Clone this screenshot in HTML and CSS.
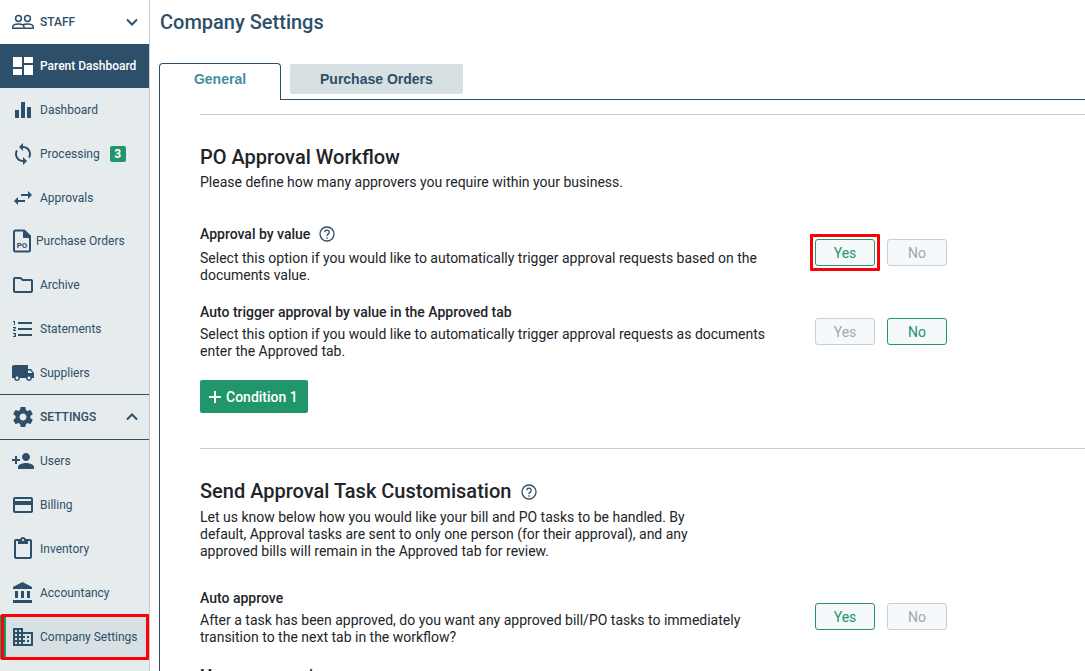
FILE: index.html
```html
<!DOCTYPE html>
<html lang="en">
<head>
<meta charset="utf-8">
<title>Company Settings</title>
<link rel="stylesheet" href="styles.css">
</head>
<body>
<div class="app">
  <nav class="sidebar" aria-label="Main">
    <button class="nav-group nav-staff" type="button">
      <svg class="icon" viewBox="0 0 24 24"><g fill="none" stroke="currentColor" stroke-width="1.500"><circle cx="7.500" cy="8.500" r="2.900"/><circle cx="16.500" cy="8.500" r="2.900"/><path d="M1.800 18.300v-1.300c0-1.800 2.700-3 5.700-3s5.500 1.200 5.500 3v1.300zM11.500 15c1.300-.7 3.200-1 5-1 3 0 5.700 1.200 5.700 3v1.300H13"/></g></svg>
      <span>STAFF</span>
      <svg class="chevron" viewBox="0 0 12 8"><path d="M1 1.500l5 5 5-5"/></svg>
    </button>
    <a class="nav-item parent" href="#"><svg class="icon" viewBox="0 0 24 24"><path d="M2 3h9v10H2zM13 3h9v6h-9zM2 15h9v6H2zM13 11h9v10h-9z"/></svg><span>Parent Dashboard</span></a>
    <a class="nav-item" href="#"><svg class="icon" viewBox="0 0 24 24"><path d="M4 12h4v8H4zM10 4h4v16h-4zM16 9h4v11h-4z"/></svg><span>Dashboard</span></a>
    <a class="nav-item" href="#"><svg class="icon" viewBox="0 0 24 24"><path d="M12 4V1L8 5l4 4V6c3.310 0 6 2.690 6 6 0 1.010-.25 1.970-.7 2.800l1.460 1.460C19.540 15.030 20 13.570 20 12c0-4.420-3.580-8-8-8zm0 14c-3.310 0-6-2.690-6-6 0-1.010.25-1.970.7-2.800L5.240 7.740C4.460 8.970 4 10.430 4 12c0 4.420 3.580 8 8 8v3l4-4-4-4v3z"/></svg><span>Processing</span><span class="badge">3</span></a>
    <a class="nav-item" href="#"><svg class="icon" viewBox="0 0 24 24"><path d="M21 9l-4-4v3h-7v2h7v3l4-4zM3 15l4 4v-3h7v-2H7v-3l-4 4z"/></svg><span>Approvals</span></a>
    <a class="nav-item orders" href="#"><svg class="icon" viewBox="0 0 24 24"><path fill="none" stroke="currentColor" stroke-width="2" d="M4.500 1.500h8.500l6 6V21a1.500 1.500 0 0 1-1.500 1.500h-13A1.500 1.500 0 0 1 3 21V3a1.500 1.500 0 0 1 1.500-1.500z"/><path d="M12 1h2l6 6v2h-8z"/><text class="icon-po" x="11" y="18.500">PO</text></svg><span>Purchase Orders</span></a>
    <a class="nav-item" href="#"><svg class="icon" viewBox="0 0 24 24"><path d="M9.170 6l2 2H20v10H4V6h5.170M10 4H4c-1.100 0-1.990.9-1.990 2L2 18c0 1.100.9 2 2 2h16c1.100 0 2-.9 2-2V8c0-1.100-.9-2-2-2h-8l-2-2z"/></svg><span>Archive</span></a>
    <a class="nav-item" href="#"><svg class="icon" viewBox="0 0 24 24"><path d="M2 17h2v.5H3v1h1v.5H2v1h3v-4H2v1zm1-9h1V4H2v1h1v3zm-1 3h1.800L2 13.100v.9h3v-1H3.200L5 10.900V10H2v1zm5-6v2h14V5H7zm0 14h14v-2H7v2zm0-6h14v-2H7v2z"/></svg><span>Statements</span></a>
    <a class="nav-item suppliers" href="#"><svg class="icon" viewBox="0 0 24 24"><path d="M20 8h-3V4H3c-1.100 0-2 .9-2 2v11h2c0 1.660 1.340 3 3 3s3-1.340 3-3h6c0 1.660 1.340 3 3 3s3-1.340 3-3h2v-5l-3-4zM6 18.500c-.83 0-1.500-.67-1.500-1.500s.67-1.500 1.500-1.500 1.500.67 1.500 1.500-.67 1.500-1.500 1.500zm13.500-9l1.960 2.500H17V9.500h2.500zm-1.500 9c-.83 0-1.500-.67-1.500-1.500s.67-1.500 1.500-1.500 1.500.67 1.500 1.500-.67 1.500-1.500 1.500z"/></svg><span>Suppliers</span></a>
    <button class="nav-group nav-settings" type="button">
      <svg class="icon" viewBox="0 0 24 24"><path d="M19.430 12.980c.04-.32.070-.64.070-.98s-.03-.66-.07-.98l2.110-1.650c.19-.15.24-.42.120-.64l-2-3.460c-.12-.22-.39-.3-.61-.22l-2.490 1c-.52-.4-1.080-.73-1.690-.98l-.38-2.650C14.460 2.180 14.250 2 14 2h-4c-.25 0-.46.180-.49.420l-.38 2.650c-.61.250-1.170.59-1.690.98l-2.490-1c-.23-.09-.49 0-.61.220l-2 3.460c-.13.220-.07.490.12.640l2.110 1.650c-.04.320-.07.650-.07.980s.03.660.07.980l-2.110 1.650c-.19.150-.24.420-.12.640l2 3.460c.12.220.39.300.61.220l2.490-1c.52.4 1.080.73 1.690.98l.38 2.650c.03.240.24.420.49.420h4c.25 0 .46-.18.490-.42l.38-2.650c.61-.25 1.170-.59 1.690-.98l2.490 1c.23.090.49 0 .61-.22l2-3.460c.12-.22.070-.49-.12-.64l-2.110-1.650zM12 15.500c-1.930 0-3.500-1.570-3.500-3.500s1.570-3.500 3.500-3.500 3.500 1.570 3.500 3.500-1.570 3.500-3.500 3.500z"/></svg>
      <span>SETTINGS</span>
      <svg class="chevron" viewBox="0 0 12 8"><path d="M1 6.500l5-5 5 5"/></svg>
    </button>
    <a class="nav-item users" href="#"><svg class="icon" viewBox="0 0 24 24"><path d="M15 12c2.210 0 4-1.790 4-4s-1.790-4-4-4-4 1.790-4 4 1.790 4 4 4zm-9-2V7H4v3H1v2h3v3h2v-3h3v-2H6zm9 4c-2.670 0-8 1.340-8 4v2h16v-2c0-2.660-5.330-4-8-4z"/></svg><span>Users</span></a>
    <a class="nav-item" href="#"><svg class="icon" viewBox="0 0 24 24"><path d="M20 4H4c-1.110 0-1.990.89-1.990 2L2 18c0 1.110.89 2 2 2h16c1.110 0 2-.89 2-2V6c0-1.110-.89-2-2-2zm0 14H4v-6h16v6zm0-10H4V6h16v2z"/></svg><span>Billing</span></a>
    <a class="nav-item" href="#"><svg class="icon" viewBox="0 0 24 24"><path d="M19 2h-4.180C14.400.84 13.300 0 12 0S9.600.84 9.180 2H5c-1.100 0-2 .9-2 2v16c0 1.100.9 2 2 2h14c1.100 0 2-.9 2-2V4c0-1.100-.9-2-2-2zm-7 0c.55 0 1 .45 1 1s-.45 1-1 1-1-.45-1-1 .45-1 1-1zm7 18H5V4h2v3h10V4h2v16z"/></svg><span>Inventory</span></a>
    <a class="nav-item" href="#"><svg class="icon" viewBox="0 0 24 24"><path d="M4 10v7h3v-7H4zm6 0v7h3v-7h-3zM2 22h19v-3H2v3zm14-12v7h3v-7h-3zm-4.500-9L2 6v2h19V6l-9.500-5z"/></svg><span>Accountancy</span></a>
    <a class="nav-item current marked" href="#" aria-current="page"><svg class="icon" viewBox="0 0 24 24"><path d="M12 7V3H2v18h20V7H12zM6 19H4v-2h2v2zm0-4H4v-2h2v2zm0-4H4V9h2v2zm0-4H4V5h2v2zm4 12H8v-2h2v2zm0-4H8v-2h2v2zm0-4H8V9h2v2zm0-4H8V5h2v2zm10 12h-8v-2h2v-2h-2v-2h2v-2h-2V9h8v10zm-2-8h-2v2h2v-2zm0 4h-2v2h2v-2z"/></svg><span>Company Settings</span></a>
  </nav>
  <main class="main">
    <h1 class="page-title">Company Settings</h1>
    <div class="tabs" role="tablist">
      <button class="tab tab-active" type="button" role="tab" aria-selected="true">General</button>
      <div class="tabs-rest"><button class="tab tab-idle" type="button" role="tab" aria-selected="false">Purchase Orders</button></div>
    </div>
    <div class="panel" role="tabpanel">
      <section class="section">
        <h2>PO Approval Workflow</h2>
        <p class="intro">Please define how many approvers you require within your business.</p>
        <div class="setting by-value">
          <div class="copy">
            <h3>Approval by value <svg class="help" viewBox="0 0 16 16" role="img" aria-label="Help"><circle cx="8" cy="8" r="7"/><path d="M5.800 6.300a2.200 2.200 0 1 1 3.400 1.800C8.400 8.600 8 9 8 9.900M8 11.200v1.500"/></svg></h3>
            <p>Select this option if you would like to automatically trigger approval requests based on the documents value.</p>
          </div>
          <div class="choices" role="group" aria-label="Approval by value"><button class="choice chosen marked" type="button" aria-pressed="true">Yes</button><button class="choice" type="button" aria-pressed="false">No</button></div>
        </div>
        <div class="setting trigger">
          <div class="copy">
            <h3>Auto trigger approval by value in the Approved tab</h3>
            <p>Select this option if you would like to automatically trigger approval requests as documents enter the Approved tab.</p>
          </div>
          <div class="choices" role="group" aria-label="Auto trigger approval by value in the Approved tab"><button class="choice" type="button" aria-pressed="false">Yes</button><button class="choice chosen" type="button" aria-pressed="true">No</button></div>
        </div>
        <button class="condition" type="button"><svg class="plus" viewBox="0 0 14 14"><path d="M7 1v12M1 7h12"/></svg>Condition 1</button>
      </section>
      <section class="section tasks">
        <h2>Send Approval Task Customisation <svg class="help" viewBox="0 0 16 16" role="img" aria-label="Help"><circle cx="8" cy="8" r="7"/><path d="M5.800 6.300a2.200 2.200 0 1 1 3.400 1.800C8.400 8.600 8 9 8 9.900M8 11.200v1.500"/></svg></h2>
        <p class="intro">Let us know below how you would like your bill and PO tasks to be handled. By default, Approval tasks are sent to only one person (for their approval), and any approved bills will remain in the Approved tab for review.</p>
        <div class="setting auto">
          <div class="copy">
            <h3>Auto approve</h3>
            <p>After a task has been approved, do you want any approved bill/PO tasks to immediately transition to the next tab in the workflow?</p>
          </div>
          <div class="choices" role="group" aria-label="Auto approve"><button class="choice chosen" type="button" aria-pressed="true">Yes</button><button class="choice" type="button" aria-pressed="false">No</button></div>
        </div>
        <div class="setting manager">
          <div class="copy"><h3>Manager approval</h3></div>
        </div>
      </section>
    </div>
  </main>
</div>
</body>
</html>
```
FILE: styles.css
```css
* { box-sizing: border-box; }
body { margin: 0; height: 100vh; overflow: hidden; background: #fff; color: #212529; font-family: Roboto, "Liberation Sans", sans-serif; font-size: 14px; line-height: 17px; }
h1, h2, h3, p { margin: 0; }
button { font-family: inherit; cursor: pointer; }
.app { display: flex; height: 100vh; overflow: hidden; }

.sidebar { flex: 0 0 150px; display: flex; flex-direction: column; background: #e6ebed; border-right: 1px solid #c3cbcf; }
.nav-item, .nav-group { flex: none; display: flex; align-items: center; gap: 5px; height: 44px; padding: 0 11px; color: #2d4f69; font-size: 12px; line-height: 16px; text-decoration: none; white-space: nowrap; }
.icon { flex: none; width: 24px; height: 24px; fill: currentColor; }
.nav-group { border: 0; background: none; font-weight: 500; text-align: left; }
.nav-staff { background: #fff; }
.nav-settings { height: 46px; border-top: 1px solid #2d4f69; border-bottom: 1px solid #2d4f69; }
.chevron { width: 12px; height: 8px; margin-left: auto; fill: none; stroke: currentColor; stroke-width: 2; }
.parent { background: #2d4f69; color: #fff; font-weight: 500; }
.orders { height: 43px; padding-bottom: 1px; gap: 1px; }
.icon-po { font: bold 8px Roboto, sans-serif; text-anchor: middle; }
.suppliers { height: 43px; }
.users { height: 43px; padding-bottom: 1px; }
.badge { width: 16px; margin-left: 5px; border-radius: 2px; background: #21966b; color: #fff; font-weight: 700; text-align: center; }
.current { background: #d7e0e3; box-shadow: inset 6px 0 #21966b; }
.marked { position: relative; }
.marked::after { content: ""; position: absolute; inset: -6px; border: 3px solid #fb0007; border-radius: 1px; }
.current.marked::after { inset: -1px 0 -1px 1px; }

.main { flex: 1; min-width: 0; padding-left: 9px; display: flex; flex-direction: column; }
.page-title { padding: 10px 1px 29px; color: #2d4f69; font-size: 20px; line-height: 24px; font-weight: 500; }
.tabs { display: flex; }
.tab { font-family: "Liberation Sans", Arial, sans-serif; font-size: 14px; line-height: 16px; font-weight: 700; }
.tab-active { width: 122px; height: 37px; padding: 0 0 6px; border: 1px solid #2d4f69; border-bottom: 0; border-radius: 4px 4px 0 0; background: #fff; color: #3f8f9c; }
.tabs-rest { flex: 1; padding: 1px 9px 5px; border-bottom: 1px solid #2d4f69; }
.tab-idle { padding: 7px 30px; border: 0; border-radius: 2px; background: #d7e0e3; color: #2d4f69; }
.panel { flex: 1; border-left: 1px solid #2d4f69; padding: 14px 0 0 40px; }
.section { padding: 30px 0 35px; border-top: 1px solid #c3d0d6; }
h2 { display: flex; align-items: center; gap: 10px; font-size: 20px; line-height: 25px; font-weight: 500; }
h3 { display: flex; align-items: center; gap: 9px; font-size: 14px; line-height: 18px; font-weight: 500; }
.help { width: 16px; height: 16px; fill: none; stroke: #2d4f69; stroke-width: 1.3; }
.intro { max-width: 500px; padding-top: 4px; }
.tasks .intro { padding-top: 5px; }
.setting { display: flex; align-items: center; }
.copy { flex: 0 1 575px; margin-right: 40px; }
.by-value { margin-top: 34px; }
.by-value h3 { margin-bottom: 7px; }
.by-value .choices { padding-bottom: 4px; }
.trigger { margin-top: 19px; }
.trigger h3 { margin-bottom: 5px; }
.auto { margin-top: 29px; }
.auto h3 { margin-bottom: 5px; }
.auto .choices { padding-bottom: 2px; }
.manager { margin-top: 20px; }
.choices { flex: none; display: flex; gap: 12px; }
.choice { width: 60px; height: 27px; padding: 0; border: 1px solid #c3d0d6; border-radius: 3px; background: #f5f9fc; color: #9fa8b0; font-size: 14px; }
.chosen { border-color: #21966b; color: #21966b; }
.condition { display: flex; align-items: center; gap: 4px; height: 33px; margin-top: 20px; padding: 0 10px 0 8px; border: 0; border-radius: 2px; background: #21966b; color: #fff; font-size: 14px; font-weight: 500; }
.plus { width: 14px; height: 14px; fill: none; stroke: #fff; stroke-width: 2; }
```
